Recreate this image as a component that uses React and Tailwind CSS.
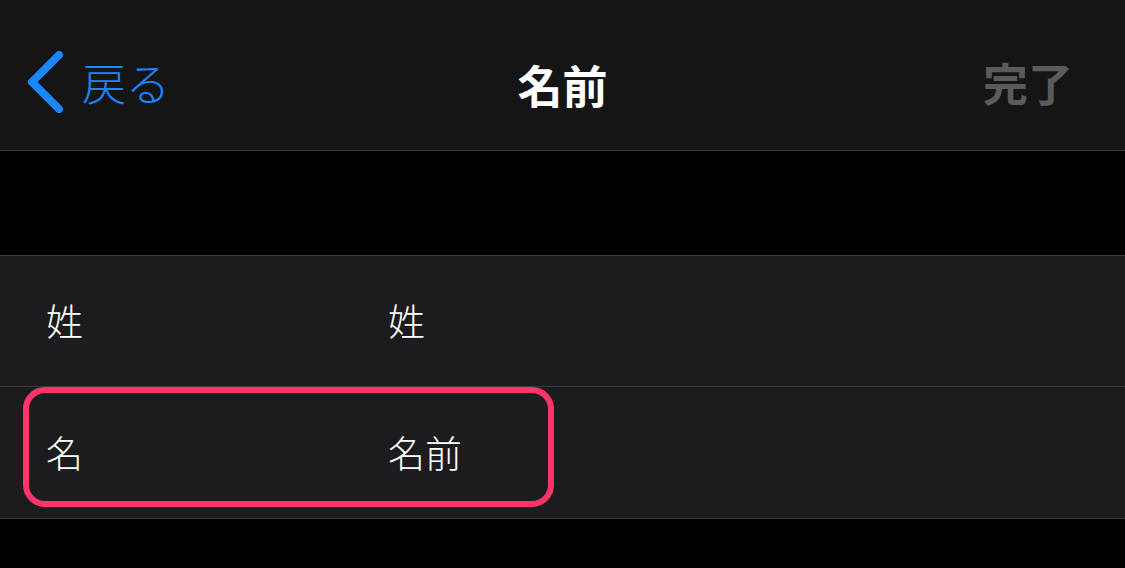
export default function App() {
  const font = { fontFamily: '"Noto Sans CJK JP", "Noto Sans", sans-serif' };
  return (
    <div className="w-[1125px] h-[568px] bg-black overflow-hidden" style={font}>
      <header className="h-[151px] bg-[#151515] border-b border-[#3a3a3c] flex items-center px-[26px] pt-[14px] relative">
        <button className="flex items-center gap-[18px] text-[#1a86ff]">
          <svg width="38" height="62" viewBox="0 0 38 62" fill="none">
            <path d="M33 4 L6 31 L33 58" stroke="#1a86ff" strokeWidth="8" strokeLinecap="round" strokeLinejoin="round" />
          </svg>
          <span className="text-[44px] font-light leading-none">戻る</span>
        </button>
        <h1 className="absolute left-1/2 -translate-x-1/2 top-[62px] text-[45px] font-bold text-white leading-none">名前</h1>
        <span className="ml-auto mr-[26px] text-[45px] font-bold text-[#5b5b5e] leading-none">完了</span>
      </header>
      <div className="h-[104px]" />
      <div className="bg-[#1c1c1e] border-t border-[#3a3a3c] border-b relative">
        <div className="h-[131px] flex items-center px-[46px] border-b border-[#3a3a3c] text-white text-[37px] font-light">
          <span className="w-[342px]">姓</span>
          <span>姓</span>
        </div>
        <div className="h-[131px] flex items-center px-[46px] text-white text-[37px] font-light relative">
          <span className="w-[342px]">名</span>
          <span>名前</span>
          <div className="absolute left-[23px] top-0 w-[531px] h-[120px] border-[6px] border-[#ff3469] rounded-[22px]" />
        </div>
      </div>
    </div>
  );
}
